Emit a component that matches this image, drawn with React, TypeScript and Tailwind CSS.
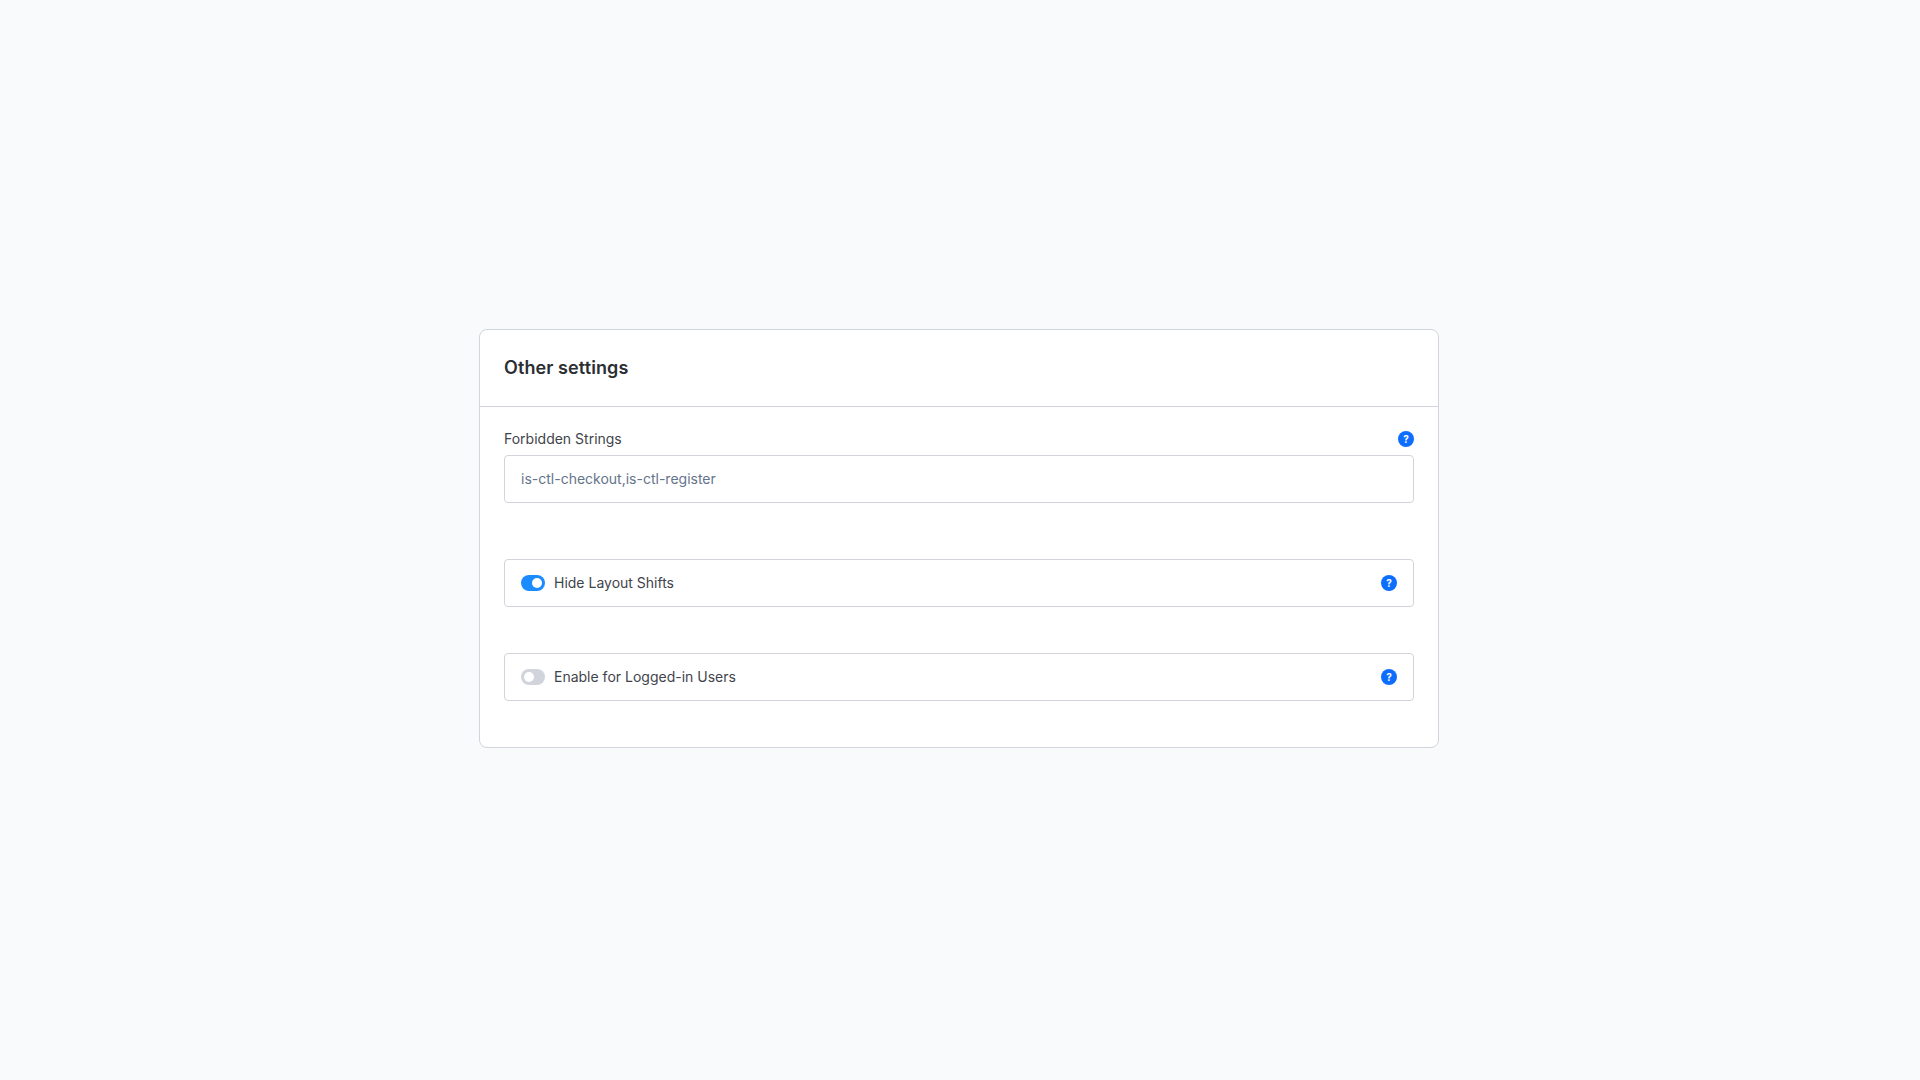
import React from "react";

function Help() {
  return (
    <span className="flex h-4 w-4 shrink-0 items-center justify-center rounded-full bg-[#0d6efd] text-[10px] leading-none font-bold text-white">
      ?
    </span>
  );
}

function ToggleRow({ label, on }: { label: string; on: boolean }) {
  return (
    <div className="flex h-12 items-center justify-between rounded border border-[#d1d5db] bg-white px-4">
      <div className="flex items-center gap-[9px]">
        <span className={on ? "flex h-4 w-6 items-center justify-end rounded-full bg-[#1a8cff] px-[3px]" : "flex h-4 w-6 items-center rounded-full bg-[#d1d5db] px-[3px]"}>
          <span className="h-[10px] w-[10px] rounded-full bg-white" />
        </span>
        <span className="text-sm text-[#3f444b]">{label}</span>
      </div>
      <Help />
    </div>
  );
}

export default function App() {
  return (
    <div className="flex min-h-screen items-center justify-center bg-[#f9fafb] pr-[2px] pb-[3px] font-['Inter',sans-serif]">
      <div className="w-[960px] rounded-lg border border-[#d1d5db] bg-white">
        <div className="flex h-[77px] items-center border-b border-[#d1d5db] px-6">
          <h2 className="text-lg font-semibold tracking-[0.005em] text-[#2b2f33]">Other settings</h2>
        </div>
        <div className="px-6 pt-[22px] pb-[46px]">
          <div className="mb-[6px] flex h-5 items-center justify-between">
            <label className="text-sm text-[#3f444b]">Forbidden Strings</label>
            <Help />
          </div>
          <div className="flex h-12 items-center rounded border border-[#d1d5db] bg-white px-4 text-sm text-[#64748b]">
            is-ctl-checkout,is-ctl-register
          </div>
          <div className="mt-14">
            <ToggleRow label="Hide Layout Shifts" on />
          </div>
          <div className="mt-[46px]">
            <ToggleRow label="Enable for Logged-in Users" on={false} />
          </div>
        </div>
      </div>
    </div>
  );
}
